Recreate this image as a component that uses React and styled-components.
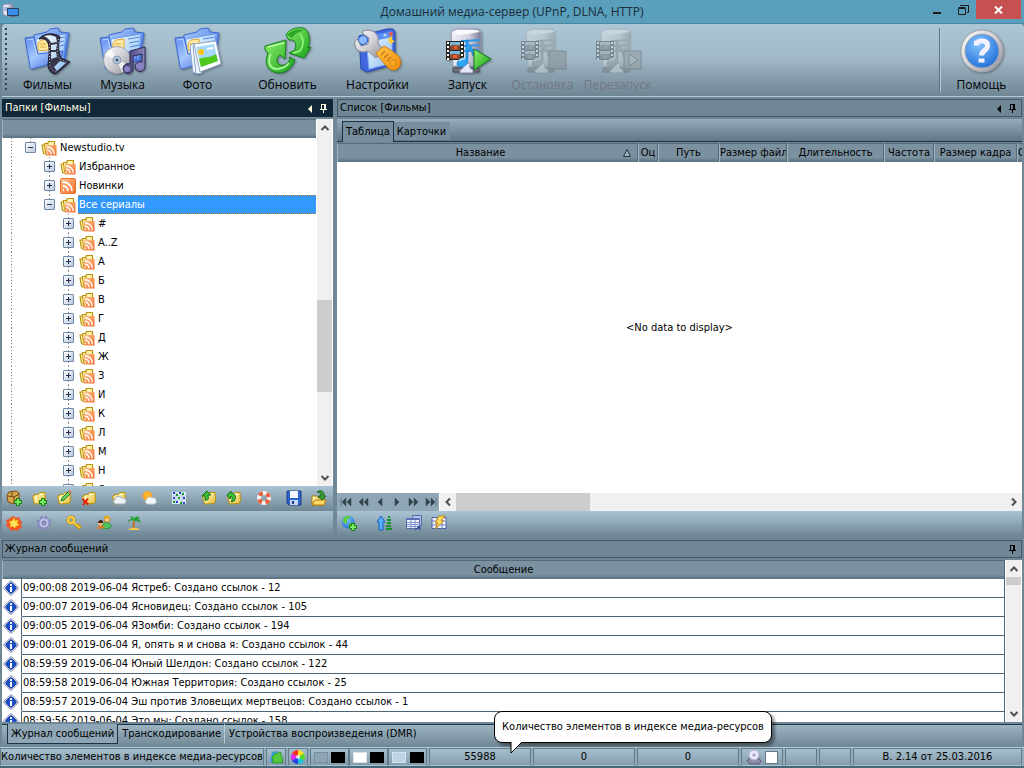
import { useState } from "react";
import styled, { createGlobalStyle } from "styled-components";

const GlobalStyle = createGlobalStyle`
    *{
        box-sizing: border-box;
    }
    body{
        margin: 0;
        background: #708896;
        color: black;
        font-family: "DejaVu Sans Condensed", "Noto Sans", sans-serif;
        font-size: 11px;
        line-height: 16px;
    }
    button{
        font: inherit;
        color: inherit;
        background: none;
        border: 0;
        padding: 0;
    }
    svg{
        display: block;
        flex: none;
    }
`;

const Window = styled.div`
    height: 100vh;
    min-height: 600px;
    display: flex;
    flex-direction: column;
    overflow: hidden;
`;

const TitleBar = styled.header`
    flex: none;
    display: grid;
    grid-template-columns: 112px 1fr 112px;
    height: 24px;
    background: #5a9fbc;
    border-bottom: 1px solid #4a87a0;
    .app-icon{
        margin: 3px 0 0 2px;
    }
    h1{
        margin: 0;
        text-align: center;
        font-family: "Open Sans", sans-serif;
        font-size: 12px;
        font-weight: 400;
        line-height: 24px;
        color: #1c2c38;
    }
`;

const WindowButtons = styled.div`
    display: flex;
    justify-content: flex-end;
    padding-right: 3px;
`;

const WindowButton = styled.button`
    display: flex;
    align-items: center;
    justify-content: center;
    width: ${({ $close }) => ($close ? "45px" : "26px")};
    height: 19px;
    background: ${({ $close }) => ($close ? "#c75050" : "transparent")};
`;

const Ribbon = styled.nav`
    flex: none;
    display: flex;
    height: 73px;
    margin: 0 0 2px 2px;
    padding: 2px 5px 2px 3px;
    border-radius: 4px 4px 0 0;
    border-bottom: 1px solid #b4ccda;
    background: linear-gradient(#adc6d5 0, #9fb7c6 50%, #8fa7b5 65%, #6f8795 100%);
    .spacer{
        flex: 1;
    }
`;

const Grip = styled.span`
    width: 2px;
    margin: 2px 3px 4px 0;
    background: repeating-linear-gradient(#2d4452 0 2px, transparent 2px 5px);
`;

const RibbonButton = styled.button`
    display: flex;
    flex-direction: column;
    align-items: center;
    width: 75px;
    margin-right: ${({ $gap }) => ($gap ? "15px" : "0")};
    font-family: "Open Sans", sans-serif;
    font-size: 12px;
    line-height: 16px;
    color: ${({ disabled }) => (disabled ? "#74777c" : "black")};
    svg{
        margin: 1px 0 2px;
        opacity: ${({ disabled }) => (disabled ? 0.35 : 1)};
        filter: ${({ disabled }) => (disabled ? "grayscale(1)" : "drop-shadow(1px 1px 1px rgba(0, 0, 0, 0.35))")};
    }
`;

const RibbonSeparator = styled.span`
    width: 2px;
    margin: 2px 3px 2px 0;
    border-left: 1px solid #5d7482;
    border-right: 1px solid #b4cbd8;
`;

const Workspace = styled.main`
    flex: 1;
    min-height: 0;
    display: flex;
    gap: 4px;
    padding: 0 2px;
`;

const Panel = styled.section`
    display: flex;
    flex-direction: column;
    min-width: 0;
    flex: ${({ $width }) => ($width ? `0 0 ${$width}` : "1")};
`;

const Caption = styled.div`
    flex: none;
    display: flex;
    align-items: center;
    gap: 7px;
    height: 18px;
    margin-bottom: 2px;
    padding: 0 4px 0 2px;
    border: 1px solid ${({ $active }) => ($active ? "#102838" : "#445a68")};
    background: ${({ $active }) => ($active ? "#102838" : "#708896")};
    color: ${({ $active }) => ($active ? "#fffbe0" : "black")};
    h2{
        flex: 1;
        margin: 0;
        font-size: 11px;
        font-weight: 400;
    }
    button{
        height: 10px;
    }
    .collapse{
        padding-top: 1px;
    }
`;

const TreeArea = styled.div`
    flex: 1;
    min-height: 0;
    display: flex;
    background: white;
`;

const Tree = styled.div`
    flex: 1;
    min-width: 0;
    overflow: hidden;
`;

const headerFace = `
    border-top: 1px solid #546b7a;
    border-left: 1px solid #a0b5c2;
    background: linear-gradient(#7b91a0 0, #7b91a0 75%, #56707f 100%);
`;

const TreeHeader = styled.div`
    height: 19px;
    ${headerFace}
`;

const TreeRow = styled.div`
    display: flex;
    align-items: center;
    height: 19px;
    svg{
        margin: 0 2px 0 1px;
    }
`;

const dots = "repeating-linear-gradient(#8c8c8c 0 1px, transparent 1px 3px)";

const Guide = styled.span`
    flex: none;
    display: flex;
    align-items: center;
    justify-content: center;
    width: 19px;
    height: 19px;
    background: ${({ $line }) => ($line ? `${dots} center top / 1px ${$line} no-repeat` : "none")};
`;

const Expander = styled.button`
    width: 11px;
    height: 11px;
    border: 1px solid #6f87a8;
    border-radius: 1px;
    background:
        linear-gradient(#20304c, #20304c) center / 5px 1px no-repeat,
        linear-gradient(#20304c, #20304c) center / 1px ${({ $open }) => ($open ? "0" : "5px")} no-repeat,
        linear-gradient(135deg, #ffffff, #b9c8de);
`;

const TreeLabel = styled.button`
    flex: ${({ $selected }) => ($selected ? "1" : "none")};
    height: 19px;
    padding: 0 1px;
    text-align: left;
    border: 1px ${({ $selected }) => ($selected ? "dotted #c87a30" : "solid transparent")};
    border-width: 1px 0;
    background: ${({ $selected }) => ($selected ? "#3399ff" : "none")};
    color: ${({ $selected }) => ($selected ? "white" : "black")};
`;

const ScrollTrack = styled.div`
    flex: ${({ $horizontal }) => ($horizontal ? "1" : "none")};
    display: flex;
    flex-direction: ${({ $horizontal }) => ($horizontal ? "row" : "column")};
    align-items: stretch;
    ${({ $horizontal }) => ($horizontal ? "height: 18px;" : "width: 17px; border-right: 1px solid white;")}
    background: #f0f0f0;
    border-left: 1px solid white;
    .thumb{
        background: #cdcdcd;
    }
    button{
        flex: none;
        width: ${({ $horizontal }) => ($horizontal ? "16px" : "15px")};
        height: 17px;
        display: flex;
        align-items: center;
        justify-content: center;
    }
`;

const ScrollPart = styled.span`
    flex: ${({ $grow, $size }) => ($size ? `0 0 ${$size}px` : `${$grow} 1 0`)};
`;

const IconBar = styled.div`
    flex: none;
    display: flex;
    height: 25px;
    background: linear-gradient(#abc4d3 0, #8ea6b4 50%, #6f8795 100%);
`;

const IconButton = styled.button`
    display: flex;
    align-items: center;
    width: 25px;
    height: 25px;
    padding: 0 5px 1px 4px;
    margin-right: ${({ $gap = 0 }) => $gap}px;
`;

const ViewTabs = styled.div`
    flex: none;
    display: flex;
    align-items: flex-end;
    height: 23px;
    margin-bottom: 1px;
    padding: 0 5px;
    border-bottom: 1px solid #1d3444;
    background: linear-gradient(#95adbb, #5f7786);
`;

const ViewTab = styled.button`
    height: ${({ $active }) => ($active ? "21px" : "18px")};
    padding: ${({ $active }) => ($active ? "0 3px" : "2px 4px 0 3px")};
    margin-bottom: ${({ $active }) => ($active ? "-1px" : "1px")};
    border: ${({ $active }) => ($active ? "1px solid #1d3444" : "0")};
    border-bottom: 0;
    background: #768e9d;
`;

const MediaTable = styled.table`
    flex: 1;
    width: 100%;
    min-height: 0;
    table-layout: fixed;
    border-spacing: 0;
    background: white;
    th{
        height: 19px;
        padding: 0;
        overflow: hidden;
        white-space: nowrap;
        font-weight: 400;
        line-height: 18px;
        border-right: 1px solid #546b7a;
        ${headerFace}
    }
    th:last-child{
        border-right: 0;
    }
    td{
        padding: 0;
        text-align: center;
    }
`;

const TableBox = styled.div`
    flex: 1;
    min-height: 0;
    display: flex;
`;

const NameHead = styled.div`
    display: flex;
    align-items: center;
    justify-content: center;
    span{
        flex: 1;
        text-align: center;
    }
    svg{
        margin-right: 6px;
    }
`;

const NavRow = styled.div`
    flex: none;
    display: flex;
    height: 18px;
    background: #8ea6b5;
`;

const NavButton = styled.button`
    display: flex;
    align-items: center;
    justify-content: center;
    width: 17px;
`;

const LogPanel = styled.section`
    flex: none;
    padding: 4px 2px 0;
`;

const LogBody = styled.div`
    display: flex;
    height: 162px;
    overflow: hidden;
    background: white;
`;

const LogList = styled.div`
    flex: 1;
    height: 162px;
    overflow: hidden;
    border-right: 1px solid #4c6474;
`;

const LogTable = styled.table`
    width: 100%;
    border-spacing: 0;
    th{
        height: 19px;
        padding: 0;
        font-weight: 400;
        line-height: 18px;
        ${headerFace}
    }
    td{
        height: 19px;
        padding: 0 0 0 1px;
        line-height: 18px;
        border-bottom: 1px solid #4c6474;
    }
    td:first-child{
        width: 20px;
        padding: 0 0 0 1px;
        border-right: 1px solid #4c6474;
        border-bottom-color: white;
    }
`;

const LogTabs = styled.div`
    flex: none;
    display: flex;
    height: 23px;
    margin: 2px 2px 0;
    padding-left: 5px;
    border-top: 1px solid #1d3444;
    background: linear-gradient(#9db5c3, #6f8795);
`;

const LogTab = styled.button`
    height: 20px;
    margin-top: -1px;
    padding: 0 3px;
    border: 1px solid ${({ $active }) => ($active ? "#1d3444" : "transparent")};
    border-top: 0;
    border-right-color: ${({ $active, $divider }) => ($active ? "#1d3444" : $divider ? "#b4ccda" : "transparent")};
    background: ${({ $active }) => ($active ? "#8ea6b5" : "none")};
`;

const StatusBar = styled.footer`
    flex: none;
    display: flex;
    gap: 2px;
    height: 21px;
    padding: 0 2px 0 0;
    border-top: 1px solid #b4ccda;
    border-bottom: 2px solid #46697a;
    background: #93acba;
`;

const StatusCell = styled.div`
    position: relative;
    flex: ${({ $width }) => ($width ? `0 0 ${$width}px` : "1")};
    display: flex;
    align-items: center;
    justify-content: center;
    gap: ${({ $gap = 0 }) => $gap}px;
    white-space: nowrap;
    border: 1px solid #637b8a;
    border-bottom-color: #abc4d3;
    background: linear-gradient(#a6bfcd, #849cab);
    input{
        appearance: none;
        width: 13px;
        height: 13px;
        margin: 0;
        background: white;
        border: 1px solid #647b8a;
    }
`;

const SwatchGroup = styled.div`
    display: flex;
`;

const Swatch = styled.span`
    width: 14px;
    height: 11px;
    border: 1px solid ${({ $edge }) => $edge};
    background: ${({ $color }) => $color};
`;

const Balloon = styled.div`
    position: absolute;
    left: 64px;
    bottom: 22px;
    width: 278px;
    height: 32px;
    line-height: 30px;
    text-align: center;
    border: 1px solid black;
    border-radius: 8px;
    background: white;
    box-shadow: 3px 3px 3px rgba(0, 0, 0, 0.4);
    z-index: 10;
    svg{
        position: absolute;
        left: 15px;
        top: 29px;
    }
`;

// shared gradients, referenced by id from every icon
const Gradients = () => (
  <svg width="0" height="0" style={{ position: "absolute" }} aria-hidden="true">
    <defs>
      <linearGradient id="blue" x1="0" y1="0" x2="1" y2="1">
        <stop offset="0" stopColor="#a8cdff" />
        <stop offset="1" stopColor="#3a68d8" />
      </linearGradient>
      <linearGradient id="cover" x1="0" y1="0" x2=".8" y2="1">
        <stop offset="0" stopColor="#5d8af0" />
        <stop offset=".5" stopColor="#a4c6fc" />
        <stop offset="1" stopColor="#4a72dc" />
      </linearGradient>
      <linearGradient id="paper" x1="0" y1="0" x2="1" y2="1">
        <stop offset="0" stopColor="#f4faff" />
        <stop offset="1" stopColor="#8fc0f4" />
      </linearGradient>
      <linearGradient id="green" x1="0" y1="0" x2="1" y2="1">
        <stop offset="0" stopColor="#8cf06a" />
        <stop offset="1" stopColor="#17a01b" />
      </linearGradient>
      <linearGradient id="gold" x1="0" y1="0" x2="1" y2="1">
        <stop offset="0" stopColor="#fffbc0" />
        <stop offset="1" stopColor="#e8c040" />
      </linearGradient>
      <linearGradient id="rss" x1="0" y1="0" x2="1" y2="1">
        <stop offset="0" stopColor="#ffc890" />
        <stop offset="1" stopColor="#f4682a" />
      </linearGradient>
      <linearGradient id="metal" x1="0" y1="0" x2="1" y2="1">
        <stop offset="0" stopColor="#ffffff" />
        <stop offset=".5" stopColor="#d0d0d6" />
        <stop offset="1" stopColor="#8d8d98" />
      </linearGradient>
      <linearGradient id="orange" x1="0" y1="0" x2="1" y2="1">
        <stop offset="0" stopColor="#ffc84a" />
        <stop offset="1" stopColor="#f28a0c" />
      </linearGradient>
      <linearGradient id="ink" x1="0" y1="0" x2="1" y2="0">
        <stop offset="0" stopColor="#383468" />
        <stop offset="1" stopColor="#8c86bc" />
      </linearGradient>
      <linearGradient id="server" x1="0" y1="0" x2="1" y2="0">
        <stop offset="0" stopColor="#f2f2fa" />
        <stop offset=".6" stopColor="#d0d0e0" />
        <stop offset="1" stopColor="#7c7c98" />
      </linearGradient>
      <radialGradient id="ball" cx=".4" cy=".3" r=".8">
        <stop offset="0" stopColor="#86c4ff" />
        <stop offset="1" stopColor="#1768d4" />
      </radialGradient>
    </defs>
  </svg>
);

const Big = ({ children }) => (
  <svg width="48" height="48" viewBox="0 0 48 48">{children}</svg>
);

const Small = ({ children }) => (
  <svg width="16" height="16" viewBox="0 0 16 16">{children}</svg>
);

const Folder = () => (
  <g strokeLinejoin="round">
    <path d="M10 8l13-3 3-3 8-1 2 4 9 1-4 28-31 4z" fill="url(#blue)" stroke="#3f68d4" />
    <path d="M12 12l30-5-3 25-27 3z" fill="url(#paper)" stroke="#6fa0ec" />
    <path d="M29 12l12-2M30 16l10-2M31 20l9-2" stroke="#4a86e4" fill="none" />
    <path d="M14 16l3-3 8-1v11l-11 1z" fill="#ffe9a0" stroke="#e0a838" />
    <path d="M16 17h6M16 20h6" stroke="#e0a838" fill="none" />
    <path d="M1 11l9-1 4 17 25-3-2 10-29 8c-1 0-2-1-2-2z" fill="url(#cover)" stroke="#3f68d4" />
    <path d="M3 13l6-1 4 17" fill="none" stroke="#b8d4ff" />
  </g>
);

const FilmsIcon = () => (
  <Big>
    <Folder />
    <path d="M15 12c4-6 16-7 21-2-2 7-2 14 1 21l9 4-14 12c-5 0-8-4-8-10 1-8 2-16 0-21-2-4-5-5-9-4z" fill="#37354a" stroke="#1d1c2c" strokeLinejoin="round" />
    <path d="M20 9c4-1 8-1 12 1l1 5-6 1c-1-3-3-5-7-7zM27 18l6-1-1 6h-5zM27 25h5l1 5-6 2zM30 40l6-6 6 2-9 8z" fill="url(#paper)" />
    <path d="M25.500 17v19c0 4 3 8 7 9M34.500 12c-1 8-2 15 1 20l9 4" fill="none" stroke="#d4d4e4" strokeWidth=".8" strokeDasharray="1 2" />
  </Big>
);

const Disc = ({ x, y, r }) => (
  <g>
    <circle cx={x} cy={y} r={r} fill="url(#metal)" stroke="#a4a4a8" />
    <path d={`M${x} ${y}L${x - 12} ${y - 5}A13 13 0 0 1 ${x - 6} ${y - 11}zM${x} ${y}L${x + 12} ${y + 5}A13 13 0 0 1 ${x + 5} ${y + 12}z`} fill="white" opacity=".8" />
    <circle cx={x} cy={y} r="4" fill="#b4c8dc" stroke="#8c9cb0" />
    <circle cx={x} cy={y} r="1.500" fill="#405870" />
  </g>
);

const MusicIcon = () => (
  <Big>
    <Folder />
    <Disc x={18} y={33} r={13.5} />
    <path d="M31 24l15-4v19a5 5 0 1 1-3-4V27l-9 2v12a5 5 0 1 1-3-4z" fill="url(#ink)" stroke="#2c2858" />
    <ellipse cx="28" cy="42" rx="3" ry="3" fill="#8c86c8" />
    <ellipse cx="40" cy="39" rx="3" ry="3" fill="#8c86c8" />
  </Big>
);

const PhotoIcon = () => (
  <Big>
    <Folder />
    <path d="M16 19l4-3 6 29-7 1z" fill="#f4f8ff" stroke="#8ca4cc" />
    <path d="M19 19l5-2 4 29-6 1z" fill="#eef4ff" stroke="#8ca4cc" />
    <path d="M20 17l22-3 5 23-21 8z" fill="white" stroke="#94a8c8" />
    <path d="M22 20l18-3 4 17-17 6z" fill="#a6d8fa" />
    <path d="M25 32c5-3 9 0 17-5l2 7-17 6z" fill="#50c81e" />
    <circle cx="27" cy="25" r="3" fill="#ffc414" />
    <path d="M33 22l6-1" stroke="white" strokeWidth="2" />
  </Big>
);

const RefreshIcon = () => (
  <Big>
    <g strokeLinejoin="round">
      <path d="M22 8C25 2 33 0 39 1c6 2 8 11 5 20l3-1-7 11-15-5 6-3c2-7 0-11-6-10z" fill="url(#green)" stroke="#128218" />
      <path d="M23 8c4-5 12-7 17-4-4 0-9 2-12 7z" fill="#2ca826" />
      <path d="M29 26l7-2c4-6 4-12 0-17" fill="none" stroke="#9cf884" strokeWidth="1.500" />
      <path d="M1 19l21-6-1 19-5-4c-4 3-4 8 0 10 4 1 8-1 10-6l-1-2 6 3c-3 8-9 13-16 13C6 45-1 40 4 26l-3-3z" fill="url(#green)" stroke="#128218" />
      <path d="M4 20l16-4M7 27c-4 8-1 14 5 15 5 0 10-2 13-6" stroke="#b6ffa4" fill="none" strokeWidth="1.500" />
    </g>
  </Big>
);

const SettingsIcon = () => (
  <Big>
    <path d="M5 9l28-7h6l2 3v32l-28 8-6-3z" fill="#3f68e0" stroke="#2a48b0" strokeLinejoin="round" />
    <path d="M12 12l26-6v30l-23 6z" fill="url(#paper)" stroke="#7ca8f0" />
    <path d="M11 10l27-6v6l-27 6z" fill="#5b90f4" />
    <circle cx="37" cy="7" r="2" fill="#f05848" />
    <circle cx="31" cy="8" r="1.500" fill="#bcd8ff" />
    <circle cx="9" cy="13" r="4.500" fill="#8cbcff" stroke="#2858c8" />
    <path d="M35 11l3-2v4l3 1-4 3-3-3z" fill="#ffcc30" />
    <path d="M9 4c10-3 17 3 15 12l6 7-8 8-8-7C6 27 0 23 1 14l2-2 4 7 7-2 1-6-6-4z" fill="url(#metal)" stroke="#8c8c96" strokeLinejoin="round" />
    <path d="M22 26l8-7c6 3 10 6 15 11 4 6 0 14-7 13-4-1-11-10-16-17z" fill="url(#orange)" stroke="#d47c10" />
    <path d="M27 28l4-4M30 31l4-4M33 34l4-4" stroke="#c87a10" strokeWidth="1.500" />
    <circle cx="39" cy="36" r="3" fill="#ffac20" stroke="#d48818" />
  </Big>
);

const ServerBase = () => (
  <g>
    <path d="M7 5l6-3h21l3 3v31l-8 3H9z" fill="url(#server)" stroke="#9c9cb4" strokeLinejoin="round" />
    <path d="M8 5l6-2h19l3 2-20 3z" fill="#fafaff" />
    <path d="M17 14c8 0 13-1 19-1M18 19c8 0 12-1 17-1M19 24c7 0 11-1 16-1" stroke="#3098e8" strokeWidth="2" fill="none" />
    <path d="M9 41h10v4H9zM25 41h10v4H25z" fill="#72727c" stroke="#4c4c58" />
    <path d="M19 36h7v5l3 2v3H16v-3l3-2z" fill="#e4e4fa" stroke="#8888a8" />
    <path d="M2 14h18v19H2z" fill="#292522" />
    <path d="M6 15h10v8H6zM6 24h10v8H6z" fill="#78b8e0" />
    <path d="M6 19c4-3 6 0 10-1v5H6zM6 28c4-3 6 0 10-1v5H6z" fill="#8c4c30" />
    <path d="M10 19h3v3h-3zM9 28h4v3H9z" fill="#ec5c30" />
    <path d="M4 15v18M18 15v18" stroke="white" strokeWidth="2" strokeDasharray="2 2" />
    <path d="M22 13h2c0 7 7 7 5 16-1-5-2-6-5-6v10c0 8-11 9-11 4 0-4 5-6 9-5z" fill="#2ca4f0" stroke="#1a70c0" strokeWidth=".7" />
    <path d="M15 34c2-2 4-3 6-2" stroke="#9cd8ff" strokeWidth="2" fill="none" />
  </g>
);

const StartIcon = () => (
  <Big>
    <ServerBase />
    <path d="M30 22l17 10-17 11z" fill="url(#green)" stroke="#12761a" strokeLinejoin="round" />
  </Big>
);

const StopIcon = () => (
  <Big>
    <ServerBase />
    <path d="M30 24h17v18H30z" fill="#7c7c80" stroke="#48484c" />
  </Big>
);

const RestartIcon = () => (
  <Big>
    <ServerBase />
    <path d="M30 24h17v18H30z" fill="#909094" stroke="#48484c" />
    <path d="M35 27l9 6-9 6z" fill="#b4b4b8" stroke="#404044" />
  </Big>
);

const HelpIcon = () => (
  <Big>
    <circle cx="24" cy="24" r="21" fill="url(#metal)" stroke="#a0a4a8" />
    <circle cx="24" cy="24" r="17" fill="url(#ball)" stroke="#a8a8b0" />
    <path d="M18.500 18.500v-3c3-2 11-3 11 3 0 5-6 5-6 10" fill="none" stroke="#f4f2ff" strokeWidth="5" />
    <path d="M20.500 31.500h6v4h-6z" fill="#f4f2ff" />
  </Big>
);

const RssMark = () => (
  <path d="M2 5a9 9 0 0 1 9 9M2 9a5 5 0 0 1 5 5M2 13h1" fill="none" stroke="white" strokeWidth="1.800" />
);

const RssFolderIcon = () => (
  <Small>
    <path d="M5 14.500l-2.500-1L1 5h2.500V3.500h3l1-2h6V6" fill="#fff4b0" stroke="#b8900b" strokeWidth="1.200" strokeLinejoin="round" />
    <path d="M3.500 4l1 9M7 3.500V6" stroke="#b8900b" fill="none" />
    <rect x="5" y="5" width="10.500" height="10.500" fill="url(#rss)" />
    <g transform="translate(4.500 3) scale(.8)"><RssMark /></g>
  </Small>
);

const RssIcon = () => (
  <Small>
    <rect x=".5" y=".5" width="15" height="15" rx="1" fill="url(#rss)" stroke="#e8742c" />
    <g transform="translate(1 -1)"><RssMark /></g>
  </Small>
);

const yellowFolder = (
  <g strokeLinejoin="round">
    <path d="M3.500 14L1.500 6h2V4.500h4l1-2h5.500l.5 8-1.500 3z" fill="url(#gold)" stroke="#b8940c" />
    <path d="M4.500 6l1 7M8 4.500h4" stroke="#fffbd0" fill="none" />
  </g>
);

const plus = <path d="M9.500 7.500h3v2h2v3h-2v2h-3v-2h-2v-3h2z" fill="#78e860" stroke="#127a18" />;

const treeTools = [
  { name: "Добавить медиа-ресурс", icon: <Small><path d="M1 5l2-3 7-1 3 2v8l-5 3-6-2z" fill="#d8a850" stroke="#7c4c10" /><path d="M2 6l6 1 5-3M6 2v4M8 7v6" stroke="#6c400c" fill="none" /><g transform="translate(1 1)">{plus}</g></Small> },
  { name: "Добавить папку", icon: <Small>{yellowFolder}<g transform="translate(1 1)">{plus}</g></Small> },
  { name: "Изменить", icon: <Small>{yellowFolder}<path d="M5 11l1-3 7-7 2 2-7 7z" fill="#6cd45c" stroke="#1c7c20" /><path d="M13 1l2 2" stroke="#e86858" strokeWidth="2" /></Small> },
  { name: "Удалить", gap: 5, icon: <Small>{yellowFolder}<path d="M1.500 9l6 5.500M7 8.500L2 15" stroke="#e02010" strokeWidth="2" /></Small> },
  { name: "Погода папки", gap: 5, icon: <Small>{yellowFolder}<path d="M4 14a3 3 0 0 1 0-5 4 4 0 0 1 7-1 3 3 0 1 1 2 6z" fill="#eef2f6" stroke="#a4acb4" /></Small> },
  { name: "Погода", gap: 5, icon: <Small><circle cx="6.500" cy="6" r="4.500" fill="#ffb428" stroke="#f4a03c" /><path d="M6 14a3 3 0 0 1 0-5 3 3 0 0 1 5-1 3 3 0 1 1 2 6z" fill="#f4f8fc" stroke="#c8d0d8" /></Small> },
  { name: "Сетка", gap: 5, icon: <Small><path d="M1 2h14v12H1z" fill="#e4f0fc" /><path d="M1 6h14M1 10h14M5 2v12M11 2v12" stroke="#b4c4e0" /><path d="M3 2v2M9 2v2M13 7v2M3 7v2M6 11v2M13 12v2" stroke="#2440d8" strokeWidth="2" /><path d="M6 4v2M12 3v2M8 7v2M3 11v2M10 12v2" stroke="#18942c" strokeWidth="2" /></Small> },
  { name: "Вверх", icon: <Small>{yellowFolder}<path d="M4 10V6H1l5-5 4 4H7c1 4 0 6-3 5z" fill="#40c038" stroke="#127018" /></Small> },
  { name: "Вниз", gap: 5, icon: <Small>{yellowFolder}<path d="M4 9L1 5l4-4v2c4 0 6 4 3 8l-3 1c2-3 1-5 0-6z" fill="#40c038" stroke="#127018" /></Small> },
  { name: "Помощь", gap: 5, icon: <Small><circle cx="8" cy="8" r="5" fill="none" stroke="#f6f6f6" strokeWidth="4" /><circle cx="8" cy="8" r="5" fill="none" stroke="#ec5c38" strokeWidth="4" strokeDasharray="4 3.850" strokeDashoffset="-2" /></Small> },
  { name: "Сохранить", icon: <Small><path d="M1 1h14v14H3l-2-2z" fill="#2c64cc" stroke="#1c3c8c" /><path d="M4 1h8v7H4z" fill="#f4f8ff" /><path d="M4 10h8v5H4z" fill="#c4d8f4" /><path d="M6 11h2v3H6z" fill="#1c3c8c" /></Small> },
  { name: "Открыть", icon: <Small><path d="M1 15V6h5l1 2h6v7z" fill="url(#gold)" stroke="#b07c10" /><path d="M1 15l3-5h11l-2 5z" fill="#fcd864" stroke="#b07c10" /><path d="M6 2c5-3 7 0 7 4h2l-4 4-4-4h3c0-3-2-4-4-4z" fill="#38a430" stroke="#14641c" /></Small> },
];

const serviceTools = [
  { name: "Обработка", gap: 5, icon: <Small><path d="M8 1l2 2 3-1 1 3 2 2-1 3 1 3-3 1-2 2-3-1-3 1-2-3-3-2 1-3-1-3 3-1 2-2z" fill="#f05828" /><path d="M8 3l1 3 3-1-1 3 2 2-3 1-1 2-2-2-3 1 1-3-2-2 3-1z" fill="#ffe460" stroke="#ffb420" /></Small> },
  { name: "Параметры", gap: 5, icon: <Small><circle cx="8" cy="8" r="6" fill="none" stroke="#8484c0" strokeWidth="2.500" strokeDasharray="2.500 2.200" /><circle cx="8" cy="8" r="5" fill="#c0c0e8" stroke="#8c8cc8" /><circle cx="8" cy="8" r="2" fill="#8ca4b8" stroke="#7474ac" /></Small> },
  { name: "Доступ", gap: 5, icon: <Small><circle cx="5" cy="5" r="3" fill="none" stroke="#c8960c" strokeWidth="3" /><path d="M7 7l7 7M11 11l2-2M13 13l2-2" stroke="#c8960c" strokeWidth="2.500" /><circle cx="5" cy="5" r="3" fill="none" stroke="#ffdc48" strokeWidth="1.500" /><path d="M7 7l7 6" stroke="#ffdc48" strokeWidth="1.200" /></Small> },
  { name: "Пользователи", gap: 5, icon: <Small><circle cx="11" cy="4.500" r="3" fill="#fcc884" stroke="#b87818" /><path d="M8 3c1-4 6-3 6 1z" fill="#e8a81c" /><path d="M6 13c0-7 9-7 9-1-2 2-6 2-9 1z" fill="#50c464" stroke="#2c9440" /><circle cx="4.500" cy="8" r="2.500" fill="#f8b870" /><path d="M2 8c0-4 6-4 5 0z" fill="#382818" /><path d="M1 14c0-4 7-4 8-1z" fill="#e07c20" /></Small> },
  { name: "Выход", icon: <Small><path d="M8 6c-1 3 0 6 0 8" stroke="#bc7820" strokeWidth="2" fill="none" /><path d="M8 6c-3-2-5 0-6 2 0-3 1-4 4-4L4 2c2-1 4 0 4 2 1-3 4-3 6-1l-3 1c3 0 4 2 3 4-2-2-3-2-6-2z" fill="#24a038" /><path d="M2 15c2-3 10-3 12 0z" fill="#f0c84c" /></Small> },
];

const listTools = [
  { name: "Добавить ссылку", gap: 10, icon: <Small><circle cx="7" cy="7" r="6.500" fill="url(#ball)" /><path d="M2 4c3-4 6-4 8-2-2 2-4 1-4 4s-2 3-4 1zM8 9c3-2 4-2 5 0l-4 4c-2 0-2-2-1-4z" fill="#5ccc38" /><g transform="translate(1 1)">{plus}</g></Small> },
  { name: "Сортировка", gap: 5, icon: <Small><path d="M3 15V7H1l4-6 4 6H7v8z" fill="#58b0ff" stroke="#1464c4" /><path d="M12 2h2M11 5h4M11 8h4M10 11h5M10 14h6" stroke="#18942c" strokeWidth="2" /></Small> },
  { name: "Столбцы", icon: <Small><path d="M6.500.5h9v10h-9z" fill="#b4c8ec" stroke="#5868a8" /><path d="M.5 3.500h13v10H.5z" fill="#f0f4ff" stroke="#5868a8" /><path d="M1 3h13v2H1z" fill="#5c70b8" /><path d="M1 7.500h12M1 9.500h12M1 11.500h12M5 5v8M9 5v8" stroke="#8494cc" /><path d="M9 15l4-3M11 12h3v3" stroke="#1438a8" fill="none" /></Small> },
  { name: "Быстрый просмотр", icon: <Small><path d="M1 2.500h14v11H1z" fill="#f0f4ff" stroke="#4860a8" /><path d="M1 6h13M1 10h13M6 2v12M11 2v12" stroke="#6c80bc" /><path d="M8 1h6l-4 5h3l-9 8 3-6H4z" fill="#ffdc60" stroke="#c88c18" /></Small> },
];

const navPaths = [
  "M1 2v8M6 2v8L2 6zM11 2v8L7 6z",
  "M6 2v8L2 6zM11 2v8L7 6z",
  "M8 2v8L4 6z",
  "M4 2v8l4-4z",
  "M1 2v8l4-4zM6 2v8l4-4z",
  "M1 2v8l4-4zM6 2v8l4-4zM11 2v8",
];
const navNames = ["Первая", "Страница назад", "Назад", "Вперёд", "Страница вперёд", "Последняя"];

const Arrow = ({ dir }) => {
  const turn = { up: 0, right: 90, down: 180, left: 270 }[dir];
  return (
    <svg width="10" height="10" viewBox="0 0 10 10">
      <path d="M1.500 7L5 3.500 8.500 7" fill="none" stroke="#505050" strokeWidth="2" transform={`rotate(${turn} 5 5)`} />
    </svg>
  );
};

const Scrollbar = ({ before, size, after, horizontal }) => (
  <ScrollTrack $horizontal={horizontal}>
    <button aria-label={horizontal ? "Влево" : "Вверх"}><Arrow dir={horizontal ? "left" : "up"} /></button>
    {before > 0 && <ScrollPart $grow={before} />}
    <ScrollPart className="thumb" $size={size} />
    <ScrollPart $grow={after} />
    <button aria-label={horizontal ? "Вправо" : "Вниз"}><Arrow dir={horizontal ? "right" : "down"} /></button>
  </ScrollTrack>
);

const PinIcon = () => (
  <svg width="9" height="10" viewBox="0 0 9 10">
    <path d="M2.500 1v5M2 1.500h5M5.500 1v5M6.500 1v5M1 6.500h7M4.500 7v3" stroke="currentColor" fill="none" />
  </svg>
);

const PanelCaption = ({ title, active, collapsible }) => (
  <Caption $active={active}>
    <h2>{title}</h2>
    {collapsible && (
      <button className="collapse" aria-label="Свернуть">
        <svg width="4" height="8" viewBox="0 0 4 8"><path d="M4 0v8L0 4z" fill="currentColor" /></svg>
      </button>
    )}
    <button aria-label="Закрепить"><PinIcon /></button>
  </Caption>
);

const Tools = ({ items }) => (
  <IconBar>
    {items.map((item) => (
      <IconButton key={item.name} aria-label={item.name} $gap={item.gap}>{item.icon}</IconButton>
    ))}
  </IconBar>
);

const treeRows = [
  { label: "Newstudio.tv", level: 0, open: true, last: true },
  { label: "Избранное", level: 1 },
  { label: "Новинки", level: 1, feed: true },
  { label: "Все сериалы", level: 1, open: true, last: true },
  ..."#,A..Z,А,Б,В,Г,Д,Ж,З,И,К,Л,М,Н,О".split(",").map((label) => ({ label, level: 2 })),
];

const ribbonItems = [
  { label: "Фильмы", icon: <FilmsIcon /> },
  { label: "Музыка", icon: <MusicIcon /> },
  { label: "Фото", icon: <PhotoIcon />, gap: true },
  { label: "Обновить", icon: <RefreshIcon />, gap: true },
  { label: "Настройки", icon: <SettingsIcon />, gap: true },
  { label: "Запуск", icon: <StartIcon /> },
  { label: "Остановка", icon: <StopIcon />, disabled: true },
  { label: "Перезапуск", icon: <RestartIcon />, disabled: true },
];

const columns = [
  ["Оц", 20],
  ["Путь", 61],
  ["Размер файл", 68],
  ["Длительность", 97],
  ["Частота", 50],
  ["Размер кадра", 83],
  ["С", 5],
];

const logRows = [
  "09:00:08 2019-06-04 Ястреб: Создано ссылок - 12",
  "09:00:07 2019-06-04 Ясновидец: Создано ссылок - 105",
  "09:00:05 2019-06-04 ЯЗомби: Создано ссылок - 194",
  "09:00:01 2019-06-04 Я, опять я и снова я: Создано ссылок - 44",
  "08:59:59 2019-06-04 Юный Шелдон: Создано ссылок - 122",
  "08:59:58 2019-06-04 Южная Территория: Создано ссылок - 25",
  "08:59:57 2019-06-04 Эш против Зловещих мертвецов: Создано ссылок - 1",
  "08:59:56 2019-06-04 Это мы: Создано ссылок - 158",
];

const InfoIcon = () => (
  <Small>
    <path d="M7 1.200Q8 .2 9 1.200L14.800 7q1 1 0 2L9 14.800q-1 1-2 0L1.200 9q-1-1 0-2z" fill="#dfe4f2" stroke="#8c94b4" />
    <path d="M6.500 3.500Q8 2 9.500 3.500l3 3q1.500 1.500 0 3l-3 3q-1.500 1.500-3 0l-3-3Q2 8 3.500 6.500z" fill="#1c50c8" stroke="#123898" />
    <path d="M8 4v2M8 7v5" stroke="white" strokeWidth="2" />
  </Small>
);

const App = () => {
  const [selected, setSelected] = useState("Все сериалы");
  const [view, setView] = useState("Таблица");
  const [logTab, setLogTab] = useState("Журнал сообщений");

  return (
    <Window>
      <GlobalStyle />
      <Gradients />
      <TitleBar>
        <svg className="app-icon" width="18" height="16" viewBox="0 0 18 16">
          <path d="M1 2l3-1h6l1 2v10H4l-3-2z" fill="url(#server)" stroke="#9090a8" />
          <path d="M2 5h6M2 7h6" stroke="#6c90d8" />
          <path d="M5.500 5.500h11v7h-11z" fill="#3c8ce8" stroke="#26425c" />
          <path d="M8 13h7v1H8z" fill="#6c6c84" />
        </svg>
        <h1>Домашний медиа-сервер (UPnP, DLNA, HTTP)</h1>
        <WindowButtons>
          <WindowButton aria-label="Свернуть окно">
            <svg width="8" height="10"><path d="M0 8h8" stroke="#1c1c1c" strokeWidth="2" /></svg>
          </WindowButton>
          <WindowButton aria-label="Восстановить">
            <svg width="11" height="10" viewBox="0 0 11 10">
              <path d="M.5 3.500h7v6h-7zM.5 2.500h7M2 .5h8.500v7H9" fill="none" stroke="#1c1c1c" />
            </svg>
          </WindowButton>
          <WindowButton $close aria-label="Закрыть">
            <svg width="9" height="8" viewBox="0 0 9 8"><path d="M1 .5l7 7M8 .5l-7 7" stroke="white" strokeWidth="2" /></svg>
          </WindowButton>
        </WindowButtons>
      </TitleBar>

      <Ribbon>
        <Grip />
        {ribbonItems.map(({ label, icon, gap, disabled }) => (
          <RibbonButton key={label} $gap={gap} disabled={disabled}>
            {icon}
            {label}
          </RibbonButton>
        ))}
        <span className="spacer" />
        <RibbonSeparator />
        <RibbonButton>
          <HelpIcon />
          Помощь
        </RibbonButton>
      </Ribbon>

      <Workspace>
        <Panel $width="331px">
          <PanelCaption title="Папки [Фильмы]" active collapsible />
          <TreeArea>
            <Tree>
              <TreeHeader />
              {treeRows.map((row) => (
                <TreeRow key={row.label}>
                  <Guide $line="100%" />
                  {Array.from({ length: row.level }, (_, i) => <Guide key={i} />)}
                  <Guide $line={row.last ? "50%" : "100%"}>
                    <Expander $open={row.open} aria-label={row.open ? "Свернуть ветвь" : "Развернуть ветвь"} />
                  </Guide>
                  {row.feed ? <RssIcon /> : <RssFolderIcon />}
                  <TreeLabel $selected={row.label === selected} onClick={() => setSelected(row.label)}>
                    {row.label}
                  </TreeLabel>
                </TreeRow>
              ))}
            </Tree>
            <Scrollbar before={164} size={92} after={77} />
          </TreeArea>
          <Tools items={treeTools} />
          <Tools items={serviceTools} />
        </Panel>

        <Panel>
          <PanelCaption title="Список [Фильмы]" collapsible />
          <ViewTabs>
            {["Таблица", "Карточки"].map((name) => (
              <ViewTab key={name} $active={view === name} onClick={() => setView(name)}>{name}</ViewTab>
            ))}
          </ViewTabs>
          <TableBox>
            <MediaTable>
              <colgroup>
                <col />
                {columns.map(([name, width]) => <col key={name} width={width} />)}
              </colgroup>
              <thead>
                <tr>
                  <th>
                    <NameHead>
                      <span>Название</span>
                      <svg width="8" height="8" viewBox="0 0 8 8"><path d="M.5 7.500h7L4 .5z" fill="#9cb4c2" stroke="#203440" /></svg>
                    </NameHead>
                  </th>
                  {columns.map(([name]) => <th key={name}>{name}</th>)}
                </tr>
              </thead>
              <tbody>
                <tr><td colSpan={8}>&lt;No data to display&gt;</td></tr>
              </tbody>
            </MediaTable>
          </TableBox>
          <NavRow>
            {navPaths.map((d, i) => (
              <NavButton key={d} aria-label={navNames[i]}>
                <svg width="12" height="12" viewBox="0 0 12 12"><path d={d} fill="#34454f" stroke="#34454f" strokeWidth=".5" /></svg>
              </NavButton>
            ))}
            <Scrollbar horizontal before={0} size={134} after={415} />
          </NavRow>
          <Tools items={listTools} />
        </Panel>
      </Workspace>

      <LogPanel>
        <PanelCaption title="Журнал сообщений" />
        <LogBody>
          <LogList>
            <LogTable>
              <thead>
                <tr><th colSpan={2}>Сообщение</th></tr>
              </thead>
              <tbody>
                {logRows.map((text) => (
                  <tr key={text}>
                    <td><InfoIcon /></td>
                    <td>{text}</td>
                  </tr>
                ))}
              </tbody>
            </LogTable>
          </LogList>
          <Scrollbar before={0} size={8} after={120} />
        </LogBody>
      </LogPanel>

      <LogTabs>
        {["Журнал сообщений", "Транскодирование", "Устройства воспроизведения (DMR)"].map((name, i) => (
          <LogTab key={name} $active={logTab === name} $divider={i === 1} onClick={() => setLogTab(name)}>{name}</LogTab>
        ))}
      </LogTabs>

      <StatusBar>
        <StatusCell $width={264}>Количество элементов в индексе медиа-ресурсов</StatusCell>
        <StatusCell $width={20}>
          <Small>
            <path d="M2 13l2-10 5-1 1 4-3 8z" fill="#3c9cd8" />
            <path d="M4 8l4-4 2 1 1-2 2 1v3l2 2-1 2 1 3-4-1-2 2-2-2-3 1 1-3z" fill="#58c83c" stroke="#2c9c28" />
          </Small>
        </StatusCell>
        <StatusCell $width={20}>
          <Small>
            <path d="M8 8V1a7 7 0 0 1 6 3.500z" fill="#ffe020" />
            <path d="M8 8l6-3.500a7 7 0 0 1 0 7z" fill="#58d828" />
            <path d="M8 8l6 3.500A7 7 0 0 1 8 15z" fill="#18c8d8" />
            <path d="M8 8v7a7 7 0 0 1-6-3.500z" fill="#2840f0" />
            <path d="M8 8l-6 3.500a7 7 0 0 1 0-7z" fill="#e028e8" />
            <path d="M8 8L2 4.500A7 7 0 0 1 8 1z" fill="#f83020" />
            <circle cx="8" cy="8" r="2" fill="white" opacity=".8" />
          </Small>
        </StatusCell>
        <SwatchGroup>
          <StatusCell $width={39} $gap={3}><Swatch $color="#8ca4b4" $edge="#788f9e" /><Swatch $color="black" $edge="black" /></StatusCell>
          <StatusCell $width={39} $gap={3}><Swatch $color="white" $edge="#dce4ea" /><Swatch $color="black" $edge="black" /></StatusCell>
          <StatusCell $width={39} $gap={4}><Swatch $color="#bcd4e4" $edge="#d4e2ec" /><Swatch $color="black" $edge="black" /></StatusCell>
        </SwatchGroup>
        <StatusCell $width={102}>
          55988
          <Balloon role="tooltip">
            Количество элементов в индексе медиа-ресурсов
            <svg width="12" height="13" viewBox="0 0 12 13">
              <path d="M1 0v12L11.500 1V0z" fill="white" />
              <path d="M1 1v11L11.500 1.500" fill="none" stroke="black" />
            </svg>
          </Balloon>
        </StatusCell>
        <StatusCell $width={102}>0</StatusCell>
        <StatusCell $width={102}>0</StatusCell>
        <StatusCell $width={42} $gap={3}>
          <Small>
            <path d="M1 12l3-4h8l3 4-2 3H4z" fill="#8c8ca8" stroke="#5c5c74" />
            <circle cx="8" cy="6" r="5" fill="#e8e8fc" stroke="#b0b0d0" />
            <circle cx="8" cy="6" r="1.500" fill="#9c9ccc" />
          </Small>
          <input type="checkbox" aria-label="Диск" />
        </StatusCell>
        <StatusCell $width={32} />
        <StatusCell $width={32} />
        <StatusCell>В. 2.14 от 25.03.2016</StatusCell>
      </StatusBar>
    </Window>
  );
};

export default App;
